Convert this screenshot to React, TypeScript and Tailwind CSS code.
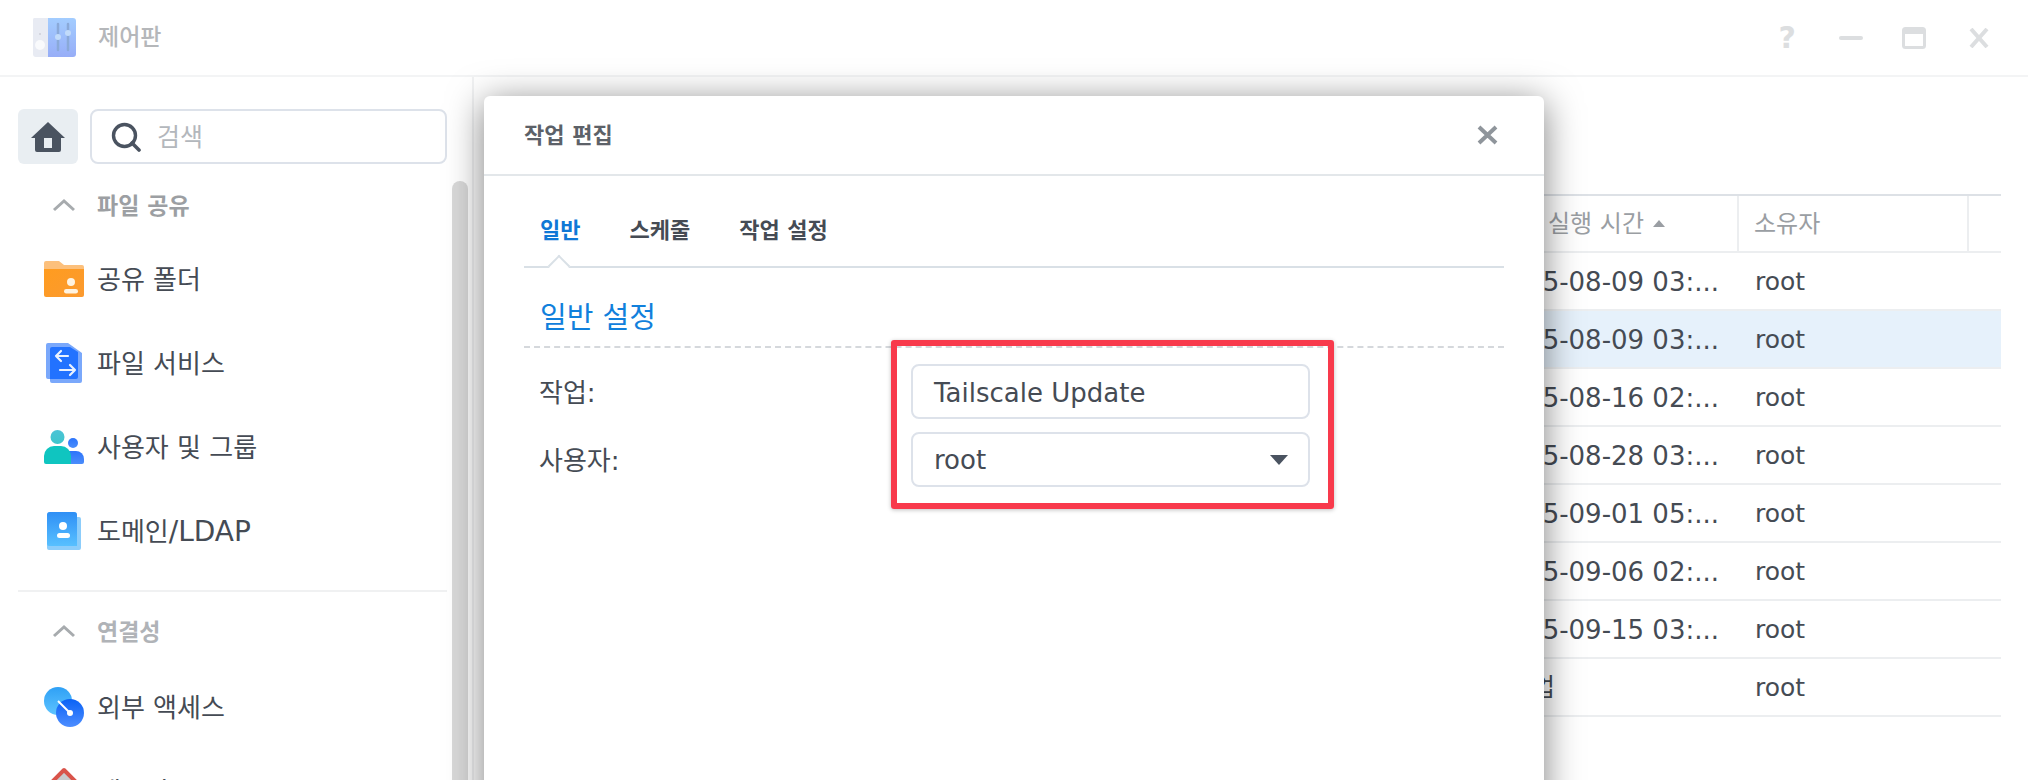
import React from 'react';

const rows = [
  '2025-08-09 03:...',
  '2025-08-09 03:...',
  '2025-08-16 02:...',
  '2025-08-28 03:...',
  '2025-09-01 05:...',
  '2025-09-06 02:...',
  '2025-09-15 03:...',
  '작업',
];

function AppIcon() {
  return (
    <svg width="44" height="40" viewBox="0 0 44 40" className="opacity-70">
      <defs>
        <linearGradient id="cpBlue" x1="0" y1="0" x2="0" y2="1">
          <stop offset="0" stopColor="#7db8ff" />
          <stop offset="1" stopColor="#6c8cf5" />
        </linearGradient>
      </defs>
      <path d="M2 0h14v39H4a3 3 0 0 1-3-3V2a2 2 0 0 1 1-2z" fill="#dfe3ee" />
      <path d="M16 0h25a3 3 0 0 1 3 3v33a3 3 0 0 1-3 3H16z" fill="url(#cpBlue)" />
      <circle cx="8" cy="27" r="5" fill="#f7f8fb" />
      <circle cx="8" cy="16" r="1" fill="#b8bcc8" />
      <path d="M26 6v26M36 6v26" stroke="#5a86c8" strokeWidth="2.5" strokeLinecap="round" />
      <circle cx="26" cy="19" r="3" fill="#a8ccf8" />
      <circle cx="36" cy="15" r="3" fill="#a8ccf8" />
    </svg>
  );
}

function FolderIcon() {
  return (
    <svg width="40" height="36" viewBox="0 0 40 36">
      <defs>
        <linearGradient id="fold" x1="0" y1="0" x2="1" y2="1">
          <stop offset="0" stopColor="#ff9c1f" />
          <stop offset="1" stopColor="#fb9a30" />
        </linearGradient>
      </defs>
      <path d="M0 2a2 2 0 0 1 2-2h13l5 4h18a2 2 0 0 1 2 2v4H0z" fill="#fcc07c" />
      <path d="M0 8h40v26a2 2 0 0 1-2 2H2a2 2 0 0 1-2-2z" fill="url(#fold)" />
      <circle cx="27" cy="21" r="4" fill="#fff3e0" />
      <rect x="20" y="28" width="14" height="4.5" rx="2.2" fill="#fff3e0" />
    </svg>
  );
}

function FileServiceIcon() {
  return (
    <svg width="36" height="40" viewBox="0 0 36 40">
      <path d="M0 2a2 2 0 0 1 2-2h20l14 10v28a2 2 0 0 1-2 2H6a2 2 0 0 1-2-2v-2H2a2 2 0 0 1-2-2z" fill="#7aa8fb" />
      <path d="M4 6a2 2 0 0 1 2-2h18l8 5v25a2 2 0 0 1-2 2H4z" fill="#2272ff" />
      <path d="M22 12H10M15 7l-5 5 5 5M14 26h15M24 21l5 5-5 5" fill="none" stroke="#eaf2ff" strokeWidth="2.2" strokeLinecap="round" strokeLinejoin="round" transform="translate(0 1)" />
    </svg>
  );
}

function UsersIcon() {
  return (
    <svg width="40" height="34" viewBox="0 0 40 34">
      <defs>
        <linearGradient id="usrA" x1="0" y1="0" x2="0" y2="1">
          <stop offset="0" stopColor="#4cc3d6" />
          <stop offset="1" stopColor="#3ec6cc" />
        </linearGradient>
        <linearGradient id="usrB" x1="0" y1="0" x2="0" y2="1">
          <stop offset="0" stopColor="#2c74fb" />
          <stop offset="1" stopColor="#4b8dfb" />
        </linearGradient>
      </defs>
      <circle cx="13.5" cy="7" r="7" fill="url(#usrA)" />
      <circle cx="29" cy="13" r="5" fill="url(#usrB)" />
      <path d="M24 21h8a8 8 0 0 1 8 8v3a2 2 0 0 1-2 2H24z" fill="url(#usrB)" />
      <path d="M0 26a10 10 0 0 1 10-10h7a10 10 0 0 1 10 10v8H2a2 2 0 0 1-2-2z" fill="#0fc5c0" />
    </svg>
  );
}

function DomainIcon() {
  return (
    <svg width="34" height="38" viewBox="0 0 34 38">
      <defs>
        <linearGradient id="dom" x1="0" y1="0" x2="0" y2="1">
          <stop offset="0" stopColor="#2f8ff5" />
          <stop offset="1" stopColor="#58c0ff" />
        </linearGradient>
      </defs>
      <path d="M0 3a3 3 0 0 1 3-3h24a3 3 0 0 1 3 3v2h2a2 2 0 0 1 2 2v29a2 2 0 0 1-2 2H2a2 2 0 0 1-2-2z" fill="#8ccdfb" />
      <path d="M0 3a3 3 0 0 1 3-3h24a3 3 0 0 1 3 3v31H2a2 2 0 0 1-2-2z" fill="url(#dom)" />
      <circle cx="16" cy="14" r="4" fill="#fff" />
      <rect x="10" y="21" width="13" height="5" rx="2.5" fill="#fff" />
    </svg>
  );
}

function ExternalIcon() {
  return (
    <svg width="40" height="40" viewBox="0 0 40 40">
      <defs>
        <linearGradient id="extA" x1="0" y1="0" x2="0" y2="1">
          <stop offset="0" stopColor="#2fa0f5" />
          <stop offset="1" stopColor="#5ec4ff" />
        </linearGradient>
        <linearGradient id="extB" x1="0" y1="0" x2="0" y2="1">
          <stop offset="0" stopColor="#0a62f5" />
          <stop offset="1" stopColor="#4d8dff" />
        </linearGradient>
      </defs>
      <circle cx="14" cy="14" r="14" fill="url(#extA)" />
      <circle cx="26" cy="26" r="14" fill="url(#extB)" />
      <path d="M14 14l12 12" stroke="#fff" strokeWidth="2" />
      <circle cx="26" cy="26" r="3" fill="#fff" />
    </svg>
  );
}

function NetworkIcon() {
  return (
    <svg width="34" height="48" viewBox="0 0 34 48">
      <path d="M17 3L31 17H3z" fill="#c9c9cc" stroke="#d9534a" strokeWidth="4" strokeLinejoin="round" />
      <rect x="7" y="17" width="20" height="28" fill="#d2d4d8" />
    </svg>
  );
}

function Chevron() {
  return (
    <svg width="24" height="14" viewBox="0 0 24 14" className="shrink-0">
      <path d="M2 12l10-9 10 9" fill="none" stroke="#a7abae" strokeWidth="3" />
    </svg>
  );
}

function SectionLabel({ label, dark }: { label: string; dark?: boolean }) {
  return (
    <div className="h-[54px] flex items-center pl-[34px] gap-[21px]">
      <Chevron />
      <span className={`pt-[2px] text-[23px] font-semibold ${dark ? 'text-[#9c9fa3]' : 'text-[#b0b3b7]'}`}>{label}</span>
    </div>
  );
}

function NavItem({ icon, label }: { icon: React.ReactNode; label: React.ReactNode }) {
  return (
    <div className="h-[84px] flex items-center pl-[26px]">
      <div className="w-[40px] flex justify-center shrink-0">{icon}</div>
      <span className="ml-[13px] pt-[2px] text-[26px] text-[#454b54] leading-none whitespace-nowrap">{label}</span>
    </div>
  );
}

function Sidebar() {
  return (
    <aside className="relative w-[474px] shrink-0 border-r-2 border-[#f1f2f3] pl-[18px] pr-[25px] pt-[32px]">
      <div className="flex gap-[12px]">
        <div className="w-[60px] h-[55px] rounded-[6px] bg-[#e9eef2] flex items-center justify-center">
          <svg width="34" height="30" viewBox="0 0 34 30">
            <path d="M17 0L34 16h-4v12a2 2 0 0 1-2 2H6a2 2 0 0 1-2-2V16H0z" fill="#4a5360" />
            <rect x="13" y="16" width="8" height="10" fill="#e9eef2" />
          </svg>
        </div>
        <div className="flex-1 h-[55px] rounded-[8px] border-2 border-[#dde2ea] flex items-center pl-[19px] gap-[16px]">
          <svg width="30" height="30" viewBox="0 0 30 30">
            <circle cx="13.5" cy="13.5" r="11" fill="none" stroke="#4a5360" strokeWidth="3.4" />
            <path d="M21 21l7 7" stroke="#4a5360" strokeWidth="3.6" strokeLinecap="round" />
          </svg>
          <span className="pt-[2px] text-[25px] text-[#b3b7bc]">검색</span>
        </div>
      </div>

      <div className="mt-[14px] mb-[5px]">
        <SectionLabel label="파일 공유" dark />
      </div>
      <NavItem icon={<FolderIcon />} label="공유 폴더" />
      <NavItem icon={<FileServiceIcon />} label="파일 서비스" />
      <NavItem icon={<UsersIcon />} label="사용자 및 그룹" />
      <NavItem icon={<DomainIcon />} label={<>도메인<span className="text-[28px]">/LDAP</span></>} />
      <div className="mt-[17px] border-t-2 border-[#f0f1f2]" />
      <div className="mt-[12px] mb-[7px]">
        <SectionLabel label="연결성" />
      </div>
      <NavItem icon={<ExternalIcon />} label="외부 액세스" />
      <NavItem icon={<NetworkIcon />} label="네트워크" />

      <div className="absolute left-[452px] top-[104px] w-[16px] h-[700px] rounded-full bg-[#d9d9d9]" />
    </aside>
  );
}

function TaskTable() {
  return (
    <div className="border-t-[2px] border-[#dde1e6] text-[26px] text-[#454b54]">
      <div className="flex h-[57px] border-b-2 border-[#eceef0] text-[#9a9ea3]">
        <div className="flex-1" />
        <div className="w-[250px] border-r-2 border-[#eceef0] flex items-center justify-end pr-[93px] whitespace-nowrap relative">
          <span className="text-[24px]">다음 실행 시간</span>
          <svg className="absolute right-[72px] top-[24px]" width="12" height="7" viewBox="0 0 12 7"><path d="M6 0l6 7H0z" fill="#9a9ea3" /></svg>
        </div>
        <div className="w-[230px] border-r-2 border-[#eceef0] flex items-center pl-[15px] text-[24px]">소유자</div>
        <div className="w-[32px]" />
      </div>
      {rows.map((date, i) => (
        <div key={i} className={`flex h-[58px] items-center pt-[2px] border-b-2 border-[#eceef0] ${i === 1 ? 'bg-[#e6f1fb]' : ''}`}>
          <div className="flex-1" />
          <div className={`w-[250px] whitespace-nowrap ${i === 7 ? 'pl-[20px] text-[25px]' : 'pl-[4px]'}`}>{date}</div>
          <div className="w-[262px] pl-[16px] text-[25px]">root</div>
        </div>
      ))}
    </div>
  );
}

function TaskDialog() {
  return (
    <div className="absolute left-[484px] top-[96px] w-[1060px] h-[720px] bg-white rounded-t-[6px] shadow-[0_6px_36px_rgba(0,0,0,0.5)]">
      <div className="h-[80px] border-b-2 border-[#e3e7ea] flex items-center justify-between pl-[40px] pr-[46px]">
        <span className="text-[22px] font-semibold text-[#5c6168]">작업 편집</span>
        <svg width="21" height="20" viewBox="0 0 21 20">
          <path d="M2 2l17 16M19 2L2 18" stroke="#8f959b" strokeWidth="4" />
        </svg>
      </div>
      <div className="px-[40px]">
        <div className="relative h-[92px] border-b-2 border-[#d9e0e6] pl-[16px] pt-[35px] flex items-start gap-[49px] text-[22px] font-semibold leading-[40px] text-[#454b54]">
          <span className="text-[#0f78d6]">일반</span>
          <span>스케줄</span>
          <span>작업 설정</span>
          <div className="absolute left-[27px] bottom-[-8px] w-[16px] h-[16px] rotate-45 bg-white border-l-2 border-t-2 border-[#d9e0e6]" />
        </div>
        <div className="h-[80px] border-b-2 border-dashed border-[#d5d8dc] pl-[16px] flex items-center text-[#1180dc] text-[29px] pt-[24px]">
          일반 설정
        </div>
        <div className="relative pl-[15px] pt-[16px] text-[26px] text-[#454b54]">
          <div className="flex items-center h-[55px]">
            <span className="w-[372px] pt-[4px]">작업:</span>
            <div className="w-[399px] h-[55px] rounded-[8px] border-2 border-[#dde2ea] flex items-center pl-[21px] pt-[3px]">Tailscale Update</div>
          </div>
          <div className="flex items-center h-[55px] mt-[13px]">
            <span className="w-[372px] pt-[4px]">사용자:</span>
            <div className="w-[399px] h-[55px] rounded-[8px] border-2 border-[#dde2ea] flex items-center justify-between pl-[21px] pr-[20px]">
              <span className="pt-[2px]">root</span>
              <svg width="18" height="10" viewBox="0 0 18 10"><path d="M0 0h18L9 10z" fill="#4a5360" /></svg>
            </div>
          </div>
          <div className="absolute left-[367px] top-[-8px] w-[443px] h-[169px] border-[6px] border-[#f83a4c] rounded-[3px] shadow-[0_1px_4px_rgba(0,0,0,0.25)]" />
        </div>
      </div>
    </div>
  );
}

export default function App() {
  return (
    <div className="relative w-[2028px] h-[780px] overflow-hidden bg-white font-['DejaVu_Sans','Noto_Sans_CJK_KR',sans-serif]">
      <header className="h-[77px] border-b-2 border-[#f3f4f5] flex items-center pl-[32px] pr-[39px]">
        <AppIcon />
        <span className="ml-[22px] text-[23px] font-medium text-[#b5b7ba]">제어판</span>
        <div className="ml-auto flex items-center">
          <span className="text-[30px] font-semibold text-[#dcdee0] leading-none">?</span>
          <div className="ml-[43px] w-[24px] h-[4px] rounded-full bg-[#dcdee0]" />
          <svg className="ml-[39px]" width="24" height="22" viewBox="0 0 24 22">
            <rect x="1.5" y="1.5" width="21" height="19" rx="2" fill="none" stroke="#dcdee0" strokeWidth="3" />
            <rect x="1" y="1" width="22" height="6" fill="#dcdee0" />
          </svg>
          <svg className="ml-[43px]" width="20" height="20" viewBox="0 0 20 20">
            <path d="M2 1l16 18M18 1L2 19" stroke="#dcdee0" strokeWidth="4" />
          </svg>
        </div>
      </header>
      <div className="flex h-[703px]">
        <Sidebar />
        <main className="flex-1 pt-[117px] pl-[16px] pr-[27px]">
          <TaskTable />
        </main>
      </div>
      <TaskDialog />
    </div>
  );
}
